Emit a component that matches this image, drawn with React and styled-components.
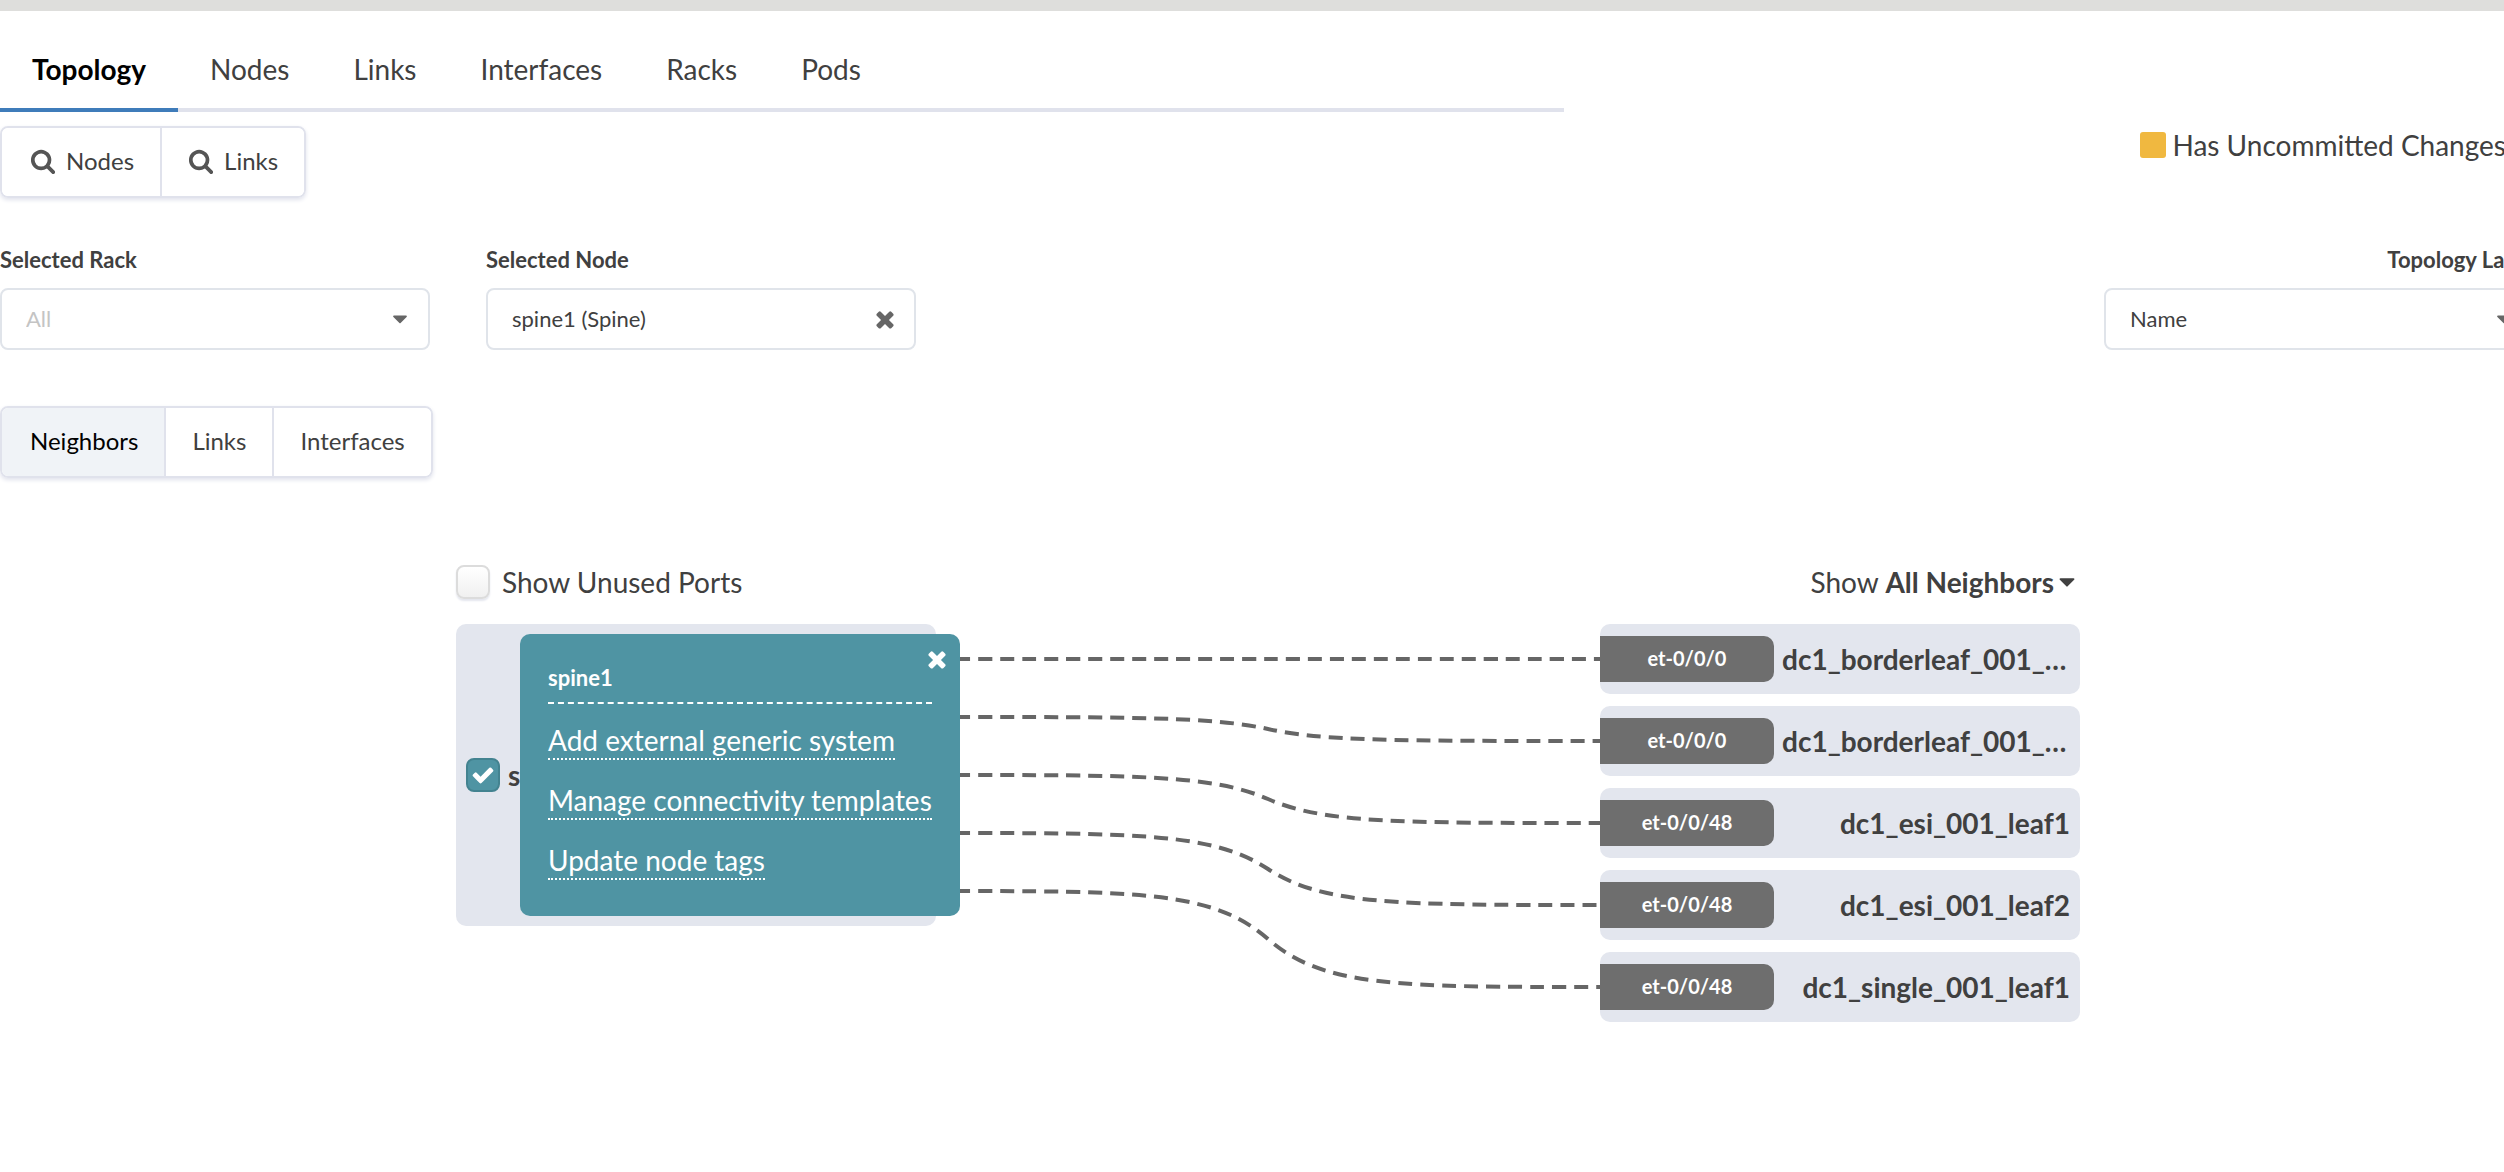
import React, { useState } from 'react';
import styled, { createGlobalStyle } from 'styled-components';

const tabs = ['Topology', 'Nodes', 'Links', 'Interfaces', 'Racks', 'Pods'];
const views = ['Neighbors', 'Links', 'Interfaces'];
const actions = ['Add external generic system', 'Manage connectivity templates', 'Update node tags'];
const neighbors = [
    { port: 'et-0/0/0', name: 'dc1_borderleaf_001_leaf1' },
    { port: 'et-0/0/0', name: 'dc1_borderleaf_001_leaf2' },
    { port: 'et-0/0/48', name: 'dc1_esi_001_leaf1' },
    { port: 'et-0/0/48', name: 'dc1_esi_001_leaf2' },
    { port: 'et-0/0/48', name: 'dc1_single_001_leaf1' },
];

const icons = {
    search: 'M1216 832q0-185-131.5-316.5t-316.5-131.5-316.5 131.5-131.5 316.5 131.5 316.5 316.5 131.5 316.5-131.5 131.5-316.5zm512 832q0 52-38 90t-90 38q-54 0-90-38l-343-342q-179 124-399 124-143 0-273.5-55.5t-225-150-150-225-55.5-273.5 55.5-273.5 150-225 225-150 273.5-55.5 273.5 55.5 225 150 150 225 55.5 273.5q0 220-124 399l343 343q37 37 37 90z',
    close: 'M1490 1322q0 40-28 68l-136 136q-28 28-68 28t-68-28l-294-294-294 294q-28 28-68 28t-68-28l-136-136q-28-28-28-68t28-68l294-294-294-294q-28-28-28-68t28-68l136-136q28-28 68-28t68 28l294 294 294-294q28-28 68-28t68 28l136 136q28 28 28 68t-28 68l-294 294 294 294q28 28 28 68z',
    check: 'M1671 566q0 40-28 68l-724 724-136 136q-28 28-68 28t-68-28l-136-136-362-362q-28-28-28-68t28-68l136-136q28-28 68-28t68 28l294 295 656-657q28-28 68-28t68 28l136 136q28 28 28 68z',
    caret: 'M1408 704q0 26-19 45l-448 448q-19 19-45 19t-45-19l-448-448q-19-19-19-45t19-45 45-19h896q26 0 45 19t19 45z',
};

function Icon ({ name, size = 26 }) {
    return (
        <svg width={size} height={size} viewBox='0 0 1792 1792' fill='currentColor' aria-hidden='true'>
            <path d={icons[name]} />
        </svg>
    );
}

export default function App () {
    const [ tab, setTab ] = useState('Topology');
    const [ view, setView ] = useState('Neighbors');
    const [ unused, setUnused ] = useState(false);
    const [ checked, setChecked ] = useState(true);
    const [ menuOpen, setMenuOpen ] = useState(true);

    return (
        <Page>
            <GlobalStyle />
            <Tabs>
                {tabs.map(t => (
                    <Tab key={t} $active={t === tab} onClick={() => setTab(t)}>{t}</Tab>
                ))}
            </Tabs>

            <Toolbar>
                <ButtonGroup>
                    <GroupButton><Icon name='search' />Nodes</GroupButton>
                    <GroupButton><Icon name='search' />Links</GroupButton>
                </ButtonGroup>
                <Legend><i />Has Uncommitted Changes</Legend>
            </Toolbar>

            <Filters>
                <Field>
                    <label htmlFor='rack'>Selected Rack</label>
                    <SelectBox $muted>
                        <select id='rack'><option>All</option></select>
                        <Icon name='caret' size={24} />
                    </SelectBox>
                </Field>
                <Field>
                    <label htmlFor='node'>Selected Node</label>
                    <SelectBox>
                        <select id='node'><option>spine1 (Spine)</option></select>
                        <Icon name='close' />
                    </SelectBox>
                </Field>
                <Field $last>
                    <label htmlFor='label'>Topology Label</label>
                    <SelectBox>
                        <select id='label'><option>Name</option></select>
                        <Icon name='caret' size={24} />
                    </SelectBox>
                </Field>
            </Filters>

            <ButtonGroup>
                {views.map(v => (
                    <GroupButton key={v} $active={v === view} onClick={() => setView(v)}>{v}</GroupButton>
                ))}
            </ButtonGroup>

            <Diagram>
                <DiagramHead>
                    <CheckLabel>
                        <CheckBox checked={unused} onChange={setUnused} />
                        Show Unused Ports
                    </CheckLabel>
                    <ShowButton>
                        <span>Show <b>All Neighbors</b></span>
                        <Icon name='caret' />
                    </ShowButton>
                </DiagramHead>
                <DiagramBody>
                    <NodeCard>
                        <CheckLabel $bold>
                            <CheckBox checked={checked} onChange={setChecked} />
                            spine1
                        </CheckLabel>
                        {menuOpen && (
                            <NodeMenu>
                                <CloseButton aria-label='Close' onClick={() => setMenuOpen(false)}><Icon name='close' /></CloseButton>
                                <h4>spine1</h4>
                                {actions.map(a => <a key={a} href='#'>{a}</a>)}
                            </NodeMenu>
                        )}
                    </NodeCard>
                    <Wires viewBox='0 0 664 386' preserveAspectRatio='none'>
                        {neighbors.map((n, i) => <path key={n.name} d={wire(35 + i * 58, 35 + i * 82)} />)}
                    </Wires>
                    <NeighborList>
                        {neighbors.map(n => (
                            <Neighbor key={n.name}>
                                <Port>{n.port}</Port>
                                <span>{n.name}</span>
                            </Neighbor>
                        ))}
                    </NeighborList>
                </DiagramBody>
            </Diagram>
        </Page>
    );
}

function wire (from, to) {
    return `M0 ${from} C204 ${from} 277 ${from} 332 ${(from + to) / 2} C387 ${to} 460 ${to} 664 ${to}`;
}

function CheckBox ({ checked, onChange }) {
    return (
        <Box $checked={checked}>
            <input type='checkbox' checked={checked} onChange={e => onChange(e.target.checked)} />
            {checked && <Icon name='check' size={24} />}
        </Box>
    );
}

const GlobalStyle = createGlobalStyle`
    * {
        box-sizing: border-box;
    }
    body {
        background-color: #fff;
        color: #404040;
        font-family: Lato, 'Liberation Sans', sans-serif;
        font-size: 28px;
        line-height: 40px;
        margin: 0;
    }
    button, select {
        background: none;
        border: none;
        color: inherit;
        cursor: pointer;
        font: inherit;
        padding: 0;
    }
    svg {
        flex-shrink: 0;
    }
`;

const Page = styled.main`
    border-top: 11px solid #dededc;
    overflow-x: hidden;
`;

const Tabs = styled.nav`
    border-bottom: 4px solid #e0e2ec;
    display: flex;
    height: 101px;
    max-width: 100%;
    width: 1564px;
`;

const Tab = styled.button`
    border-bottom: 4px solid ${p => p.$active ? '#3f7cba' : 'transparent'};
    color: ${p => p.$active ? '#000' : '#404040'};
    font-weight: ${p => p.$active ? 700 : 400};
    height: 101px;
    padding: 18px 32px 0;
`;

const Toolbar = styled.div`
    display: flex;
    justify-content: space-between;
    padding-top: 14px;
`;

const ButtonGroup = styled.div`
    border: 2px solid #e0e2ec;
    border-radius: 8px;
    box-shadow: 0 2px 4px #e0e2ec;
    display: inline-flex;
    height: 72px;
    overflow: hidden;
`;

const GroupButton = styled.button`
    align-items: center;
    background-color: ${p => p.$active ? '#f0f3f7' : '#fff'};
    color: ${p => p.$active ? '#000' : '#404040'};
    display: flex;
    font-size: 24px;
    gap: 10px;
    padding: 0 26px 2px 28px;

    & + & {
        border-left: 2px solid #e0e2ec;
        padding-left: 26px;
    }
    svg {
        color: #555;
    }
`;

const Legend = styled.div`
    align-items: center;
    display: flex;
    gap: 6px;
    height: 38px;
    margin-right: -2px;
    white-space: nowrap;

    i {
        background-color: #f0b840;
        border-radius: 3px;
        height: 26px;
        width: 26px;
    }
`;

const Filters = styled.div`
    display: flex;
    gap: 56px;
    margin: 42px 0 56px;
`;

const Field = styled.div`
    display: flex;
    flex-direction: column;
    gap: 8px;
    margin-left: ${p => p.$last ? 'auto' : 0};
    margin-right: ${p => p.$last ? '-30px' : 0};
    width: 430px;

    label {
        align-self: ${p => p.$last ? 'flex-end' : 'flex-start'};
        font-size: 22px;
        font-weight: 700;
        white-space: nowrap;
    }
`;

const SelectBox = styled.div`
    align-items: center;
    border: 2px solid #e0e4ea;
    border-radius: 8px;
    display: flex;
    height: 62px;
    padding: 0 16px 0 24px;

    select {
        appearance: none;
        color: ${p => p.$muted ? '#c4c4c4' : '#404040'};
        flex: 1;
        font-size: 22px;
        min-width: 0;
    }
    svg {
        color: #666;
    }
`;

const Diagram = styled.section`
    margin: 84px auto 0;
    padding-left: 32px;
    width: 1656px;
`;

const DiagramHead = styled.div`
    align-items: center;
    display: flex;
    justify-content: space-between;
    padding-bottom: 22px;
`;

const CheckLabel = styled.label`
    align-items: center;
    cursor: pointer;
    display: flex;
    font-weight: ${p => p.$bold ? 700 : 400};
    gap: ${p => p.$bold ? '8px' : '12px'};
`;

const Box = styled.span`
    align-items: center;
    background: ${p => p.$checked ? '#4f94a3' : 'linear-gradient(#fff, #f0f0f0)'};
    border: 2px solid ${p => p.$checked ? '#438390' : '#dcdcdc'};
    border-radius: 8px;
    box-shadow: 0 2px 2px #e4e6ee;
    color: #fff;
    display: flex;
    height: 34px;
    justify-content: center;
    position: relative;
    width: 34px;

    input {
        cursor: pointer;
        inset: 0;
        margin: 0;
        opacity: 0;
        position: absolute;
    }
`;

const ShowButton = styled.button`
    align-items: center;
    display: flex;
`;

const DiagramBody = styled.div`
    align-items: flex-start;
    display: flex;
`;

const NodeCard = styled.div`
    background-color: #e3e6ee;
    border-radius: 10px;
    display: flex;
    height: 302px;
    padding-left: 10px;
    position: relative;
    width: 480px;
`;

const NodeMenu = styled.div`
    align-items: flex-start;
    background-color: #4f94a3;
    border-radius: 10px;
    color: #fff;
    display: flex;
    flex-direction: column;
    height: 282px;
    left: 64px;
    padding: 24px 28px;
    position: absolute;
    top: 10px;
    z-index: 1;

    h4 {
        border-bottom: 2px dashed #fff;
        font-size: 22px;
        font-weight: 700;
        margin: 0 0 18px;
        padding-bottom: 4px;
        width: 100%;
    }
    a {
        border-bottom: 2px dotted #fff;
        color: #fff;
        line-height: 36px;
        margin-bottom: 22px;
        text-decoration: none;
        white-space: nowrap;
    }
`;

const CloseButton = styled.button`
    display: flex;
    position: absolute;
    right: 10px;
    top: 12px;
`;

const Wires = styled.svg`
    fill: none;
    flex: 1;
    height: 386px;
    stroke: #666;
    stroke-dasharray: 14 8;
    stroke-dashoffset: 2;
    stroke-width: 4;
`;

const NeighborList = styled.div`
    display: flex;
    flex-direction: column;
    gap: 12px;
    width: 480px;
`;

const Neighbor = styled.div`
    align-items: center;
    background-color: #e3e6ee;
    border-radius: 10px;
    display: flex;
    font-weight: 700;
    height: 70px;
    padding-right: 10px;

    span:last-child {
        flex: 1;
        overflow: hidden;
        text-align: right;
        text-overflow: ellipsis;
        white-space: nowrap;
    }
`;

const Port = styled.span`
    background-color: #6e6e6e;
    border-radius: 0 10px 10px 0;
    color: #fff;
    font-size: 20px;
    height: 46px;
    line-height: 44px;
    margin-right: 8px;
    text-align: center;
    width: 174px;
`;
